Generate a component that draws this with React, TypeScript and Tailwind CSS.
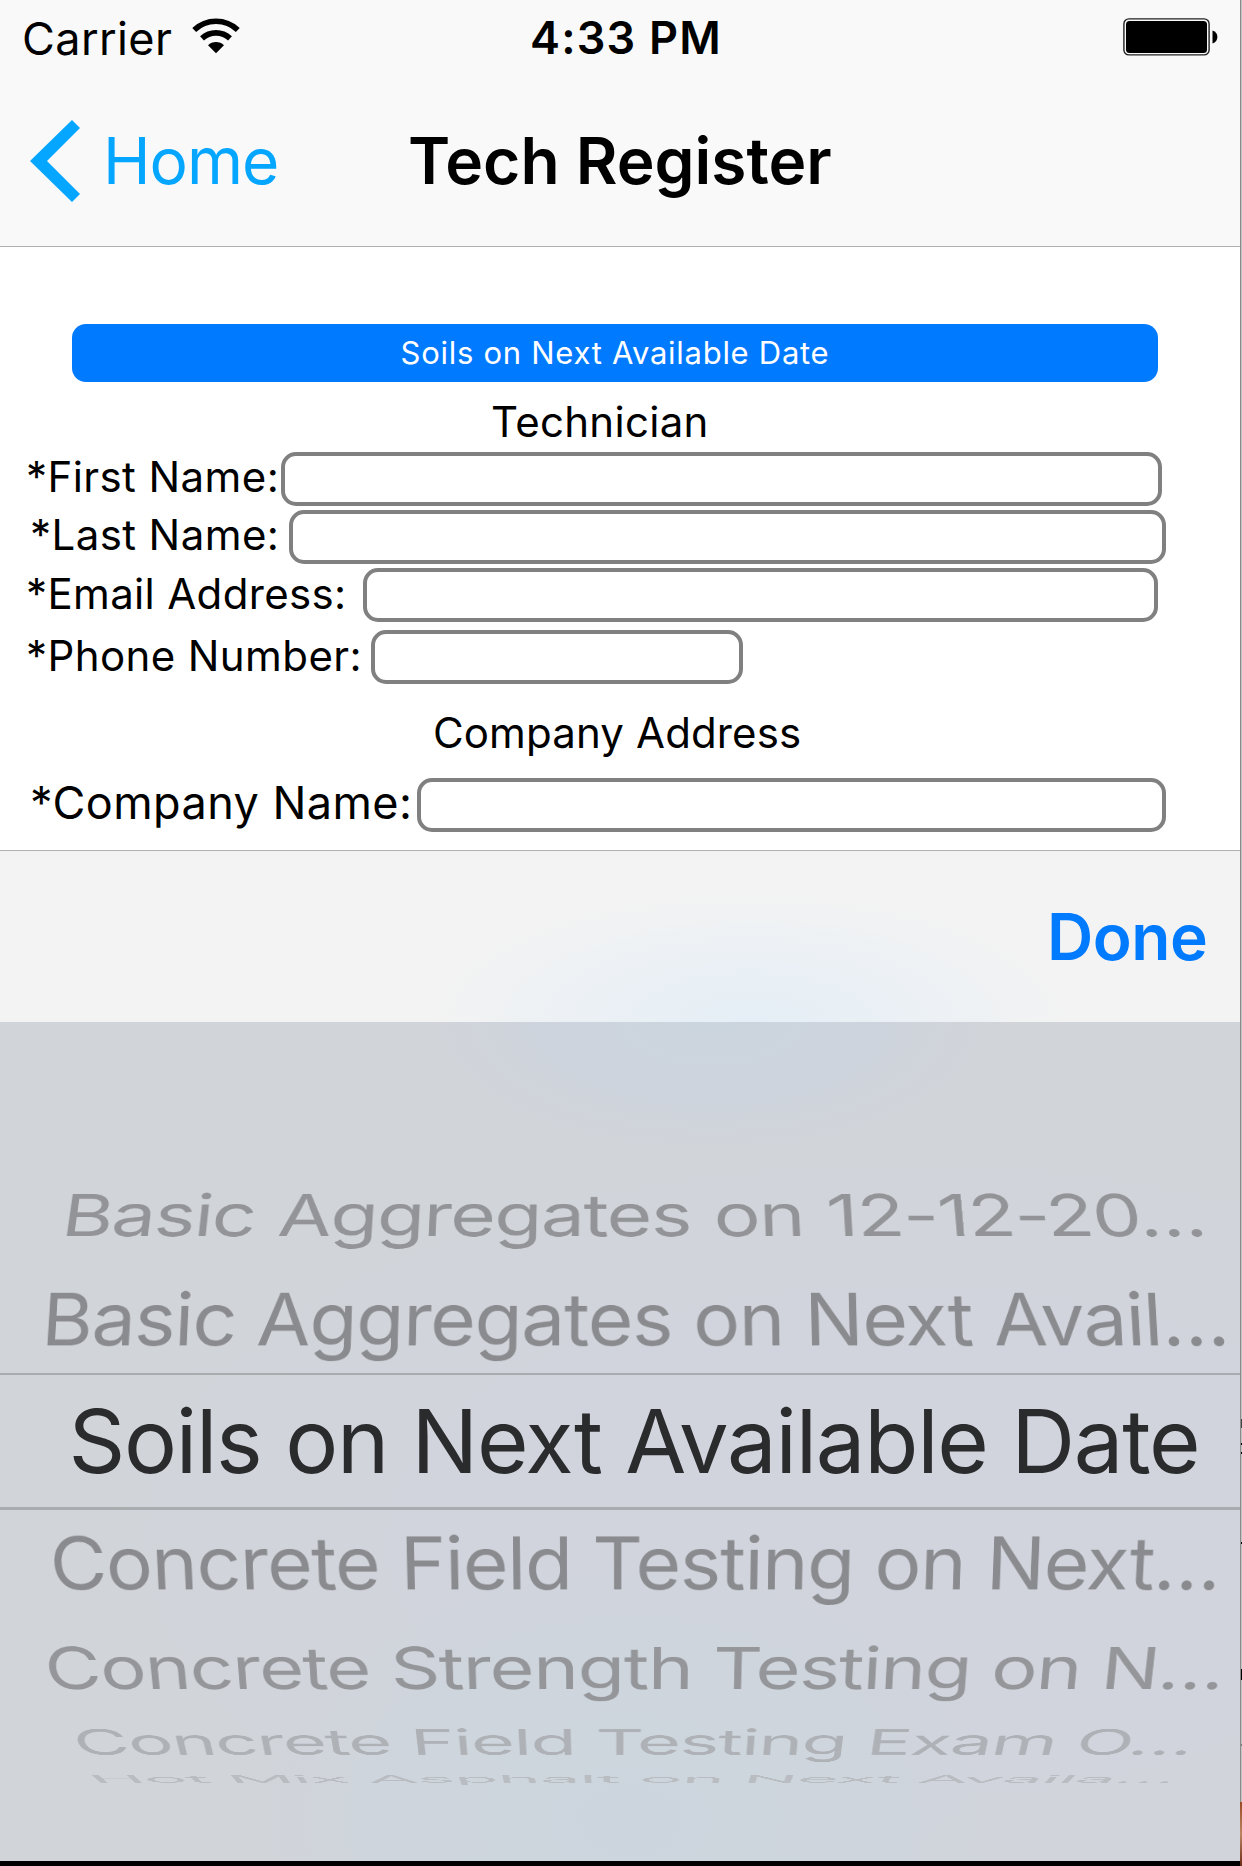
import React from "react";

function WifiIcon() {
  return (
    <svg viewBox="0 0 48 36" className="h-[36px] w-[48px]" fill="none" stroke="black">
      <path d="M2.2 12 A31.5 31.5 0 0 1 45.8 12" strokeWidth="5.6" />
      <path d="M10 20.4 A20.5 20.5 0 0 1 38 20.4" strokeWidth="5.6" />
      <path d="M24 35.2 L16 27.2 A11.6 11.6 0 0 1 32 27.2 Z" fill="black" stroke="none" />
    </svg>
  );
}

function BatteryIcon() {
  return (
    <svg viewBox="0 0 95 38" className="h-[38px] w-[95px]">
      <rect x="0.9" y="0.9" width="85.2" height="36" rx="5" fill="none" stroke="#222" strokeWidth="1.4" />
      <rect x="3" y="3" width="81" height="32" rx="3.5" fill="black" />
      <path d="M89.5 12.6 C96 14 96 24 89.5 25.4 Z" fill="black" />
    </svg>
  );
}

function Field({ label, row, labelClass, inputClass }: { label: string; row: string; labelClass: string; inputClass: string }) {
  return (
    <div className={`flex h-[54px] items-center ${row}`}>
      <label className={`shrink-0 whitespace-nowrap ${labelClass}`}>{label}</label>
      <input aria-label={label} className={`h-[54px] shrink-0 rounded-[15px] border-4 border-[#808080] bg-white outline-none ${inputClass}`} />
    </div>
  );
}

type RowProps = { text: string; row: string; tilt: string; color: string; offset: string };

function Row({ text, row, tilt, color, offset }: RowProps) {
  return (
    <div className={`flex w-[1240px] shrink-0 items-center ${row}`}>
      <div className={`flex h-[132px] w-[1240px] shrink-0 items-center ${tilt}`}>
        <span className={`shrink-0 whitespace-nowrap text-[88.5px] leading-[132px] ${color} ${offset}`}>{text}</span>
      </div>
    </div>
  );
}

export default function App() {
  return (
    <div className="flex h-[1866px] w-[1242px] overflow-hidden bg-white font-['Inter',sans-serif] text-black">
      <div className="flex h-[1866px] w-[1240px] shrink-0 flex-col overflow-hidden">
        <header className="h-[247px] shrink-0 border-b border-[#b0b0b0] bg-[#f9f9f9]">
          <div className="flex h-[76px] items-center text-[45px] leading-none">
            <span className="w-[170px] shrink-0 pl-[22px] tracking-[0.4px]">Carrier</span>
            <div className="mt-[-5px] ml-[22px] shrink-0"><WifiIcon /></div>
            <span className="ml-[290px] w-[593px] shrink-0 pb-[1px] font-semibold tracking-[1.2px]">4:33 PM</span>
            <div className="mt-[-2px] shrink-0"><BatteryIcon /></div>
          </div>
          <nav className="flex h-[169px] items-center text-[64px] leading-none">
            <svg viewBox="0 0 50 82" className="ml-[30px] h-[82px] w-[50px] shrink-0" fill="#04a6ff">
              <path d="M0 41 L42 0 L50 8 L17 41 L50 74 L42 82 Z" />
            </svg>
            <span className="ml-[23px] w-[305px] shrink-0 tracking-[-1px] text-[#04a6ff]">Home</span>
            <h1 className="font-semibold">Tech Register</h1>
          </nav>
        </header>

        <main className="flex h-[603px] shrink-0 flex-col items-start pt-[77px] text-[42px] leading-none">
          <button className="ml-[72px] h-[58px] w-[1086px] rounded-[14px] bg-[#007aff] pb-[1px] text-center text-[31px] tracking-[0.72px] text-white">
            Soils on Next Available Date
          </button>
          <h2 className="mt-[19px] ml-[491px] h-[42px] tracking-[0.3px]">Technician</h2>
          <Field label="*First Name:" row="mt-[9px]" labelClass="w-[281px] pl-[26px] pb-[5px] tracking-[0.42px]" inputClass="w-[881px]" />
          <Field label="*Last Name:" row="mt-[4px]" labelClass="w-[289px] pl-[30px] pb-[5px] tracking-[0.42px]" inputClass="w-[877px]" />
          <Field label="*Email Address:" row="mt-[4px]" labelClass="w-[363px] pl-[26px] pb-[3px] tracking-[0.35px]" inputClass="w-[795px]" />
          <Field label="*Phone Number:" row="mt-[8px]" labelClass="w-[371px] pl-[26px] pb-[3px] tracking-[0.4px]" inputClass="w-[372px]" />
          <h2 className="mt-[28px] ml-[433px] h-[42px] tracking-[0.13px]">Company Address</h2>
          <Field label="*Company Name:" row="mt-[24px]" labelClass="w-[417px] pl-[30px] pb-[5px] text-[45px] tracking-[0.44px]" inputClass="w-[749px]" />
        </main>

        <div className="flex h-[172px] shrink-0 items-center border-t border-[#b0b0b0] bg-[#f3f3f3] bg-[radial-gradient(ellipse_320px_130px_at_750px_172px,#e5eef6_0%,#eaf0f5_45%,rgba(243,243,243,0)_100%)] pt-[1px] text-[64px] leading-none">
          <button className="ml-[1047px] font-semibold tracking-[-0.45px] text-[#007aff]">Done</button>
        </div>

        <div className="flex h-[839px] shrink-0 flex-col overflow-hidden bg-[#d1d4d9] bg-[radial-gradient(ellipse_280px_130px_at_710px_0px,#cbd5de_0%,#ced4dd_60%,rgba(209,212,217,0)_100%),radial-gradient(ellipse_380px_270px_at_630px_800px,#ccd5dd_0%,#ced5dd_60%,rgba(209,212,220,0)_100%),radial-gradient(ellipse_800px_400px_at_900px_520px,#d1d4dd_0%,#d1d4dc_60%,rgba(209,212,217,0)_100%)] pt-[146px]">
          <Row text="Basic Aggregates on 12-12-20…" row="h-[93px]" tilt="[transform:matrix3d(0.8814,0,0,0,0,0.658,0,-0.00017,0,0,1,0,0,0,0,1)]" color="text-[#929497]" offset="ml-[-12px] tracking-[-1.55px] [word-spacing:2.5px]" />
          <Row text="Basic Aggregates on Next Avail…" row="mt-[4.4px] h-[107.6px]" tilt="[transform:matrix3d(0.8821,0,0,0,0,0.823,0,-0.00009,0,0,1,0,0,0,0,1)]" color="text-[#8a8b8e]" offset="ml-[-35px] tracking-[-1.27px]" />
          <Row text="Soils on Next Available Date" row="h-[137px] border-t-2 border-b-3 border-[#a9abaf]" tilt="" color="text-[#2a2b2c]" offset="ml-[68.5px] tracking-[-1.28px]" />
          <Row text="Concrete Field Testing on Next…" row="h-[105.4px]" tilt="[transform:matrix3d(0.8825,0,0,0,0,0.828,0,0.000085,0,0,1,0,0,0,0,1)]" color="text-[#8a8b8e]" offset="ml-[-26px] tracking-[-1.3px]" />
          <Row text="Concrete Strength Testing on N…" row="h-[105px]" tilt="[transform:matrix3d(0.8716,0,0,0,0,0.657,0,0.00014,0,0,1,0,0,0,0,1)]" color="text-[#94969a]" offset="ml-[-40px] tracking-[-1.32px]" />
          <Row text="Concrete Field Testing Exam O…" row="h-[43.6px]" tilt="[transform:matrix3d(0.8523,0,0,0,0,0.399,0,0.000227,0,0,1,0,0,0,0,1)]" color="text-[#aeb1b5]" offset="ml-[-21px] tracking-[-1.48px]" />
          <Row text="Hot Mix Asphalt on Next Availa…" row="h-[30px]" tilt="[transform:matrix3d(0.823,0,0,0,0,0.115,0,0.000256,0,0,1,0,0,0,0,1)]" color="text-[#b9bdc2]" offset="ml-[-24px] tracking-[-1.28px]" />
        </div>
        <div className="h-[5px] shrink-0 bg-black" />
      </div>

      <div className="flex w-[2px] shrink-0 flex-col border-l border-[#8a8a8a] bg-[#c4c4c4]">
        <div className="mt-[1419px] h-[9px] bg-[#444444]" />
        <div className="mt-[15px] h-[2px] bg-black" />
        <div className="mt-[7px] h-[2px] bg-black" />
        <div className="mt-[88px] h-[2px] bg-black" />
        <div className="mt-[125px] h-[11px] bg-black" />
        <div className="mt-[64px] h-[2px] bg-[#777777]" />
        <div className="mt-[56px] ml-[-1px] h-[64px] bg-linear-to-b from-[#9a4a24] via-[#b98560] to-[#6d2c18]" />
      </div>
    </div>
  );
}
